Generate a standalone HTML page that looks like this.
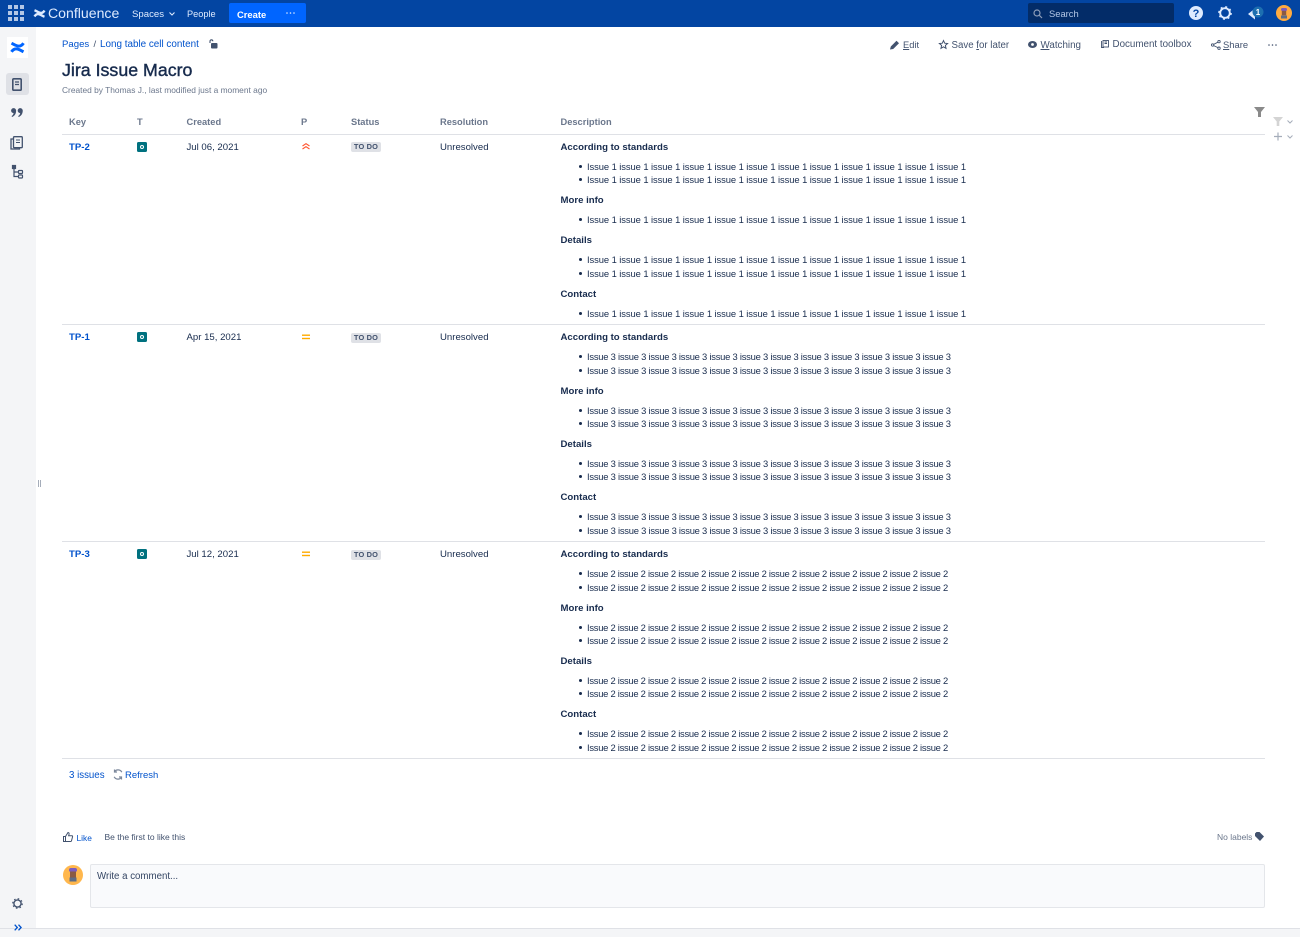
<!DOCTYPE html>
<html><head><meta charset="utf-8"><title>Jira Issue Macro</title>
<style>
html,body{margin:0;padding:0;width:1300px;height:937px;overflow:hidden;background:#fff;font-family:"Liberation Sans",sans-serif;color:#172b4d}
.t{position:absolute;white-space:nowrap;font-size:9.6px;line-height:14px;color:#172b4d}
.n{line-height:12px}
a,.l{color:#0052cc;text-decoration:none}
.h{font-weight:bold;color:#6b778c;font-size:9.3px;line-height:12px}
.b{font-weight:bold;font-size:9.6px}
.g{color:#42526e}
.u{left:587px;font-size:9.4px;letter-spacing:-.07px;line-height:12px}
.i3{letter-spacing:-.23px}
.i2{letter-spacing:-.26px}
.d{position:absolute;left:579px;width:3.4px;height:3.4px;border-radius:50%;background:#172b4d}
.r{position:absolute;left:62px;width:1203px;height:1px;background:#dfe1e6}
svg{position:absolute;overflow:visible}
.lz{position:absolute;width:30px;height:10px;left:351px;border-radius:2px;background:#dfe1e6;color:#42526e;font-size:7.4px;font-weight:bold;line-height:10px;text-align:center;letter-spacing:.2px}
.k{position:absolute;left:137px;width:10px;height:10px;border-radius:1.5px;background:#00717f}
.k:after{content:"";position:absolute;left:3px;top:3px;width:2px;height:2px;border:1px solid #fff;border-radius:50%}
</style></head><body>

<div style="position:absolute;left:0;top:0;width:1300px;height:27px;background:#0345a2"></div>
<div style="position:absolute;left:0;top:27px;width:36px;height:910px;background:#f4f5f7"></div>
<div style="position:absolute;left:0;top:928px;width:1300px;height:9px;background:#f4f5f7;border-top:1px solid #dfe1e6;box-sizing:border-box"></div>

<!-- app grid -->
<svg style="left:8px;top:5px" width="16" height="16" fill="#b3c7e6"><rect x="0" y="0" width="4" height="4"/><rect x="6" y="0" width="4" height="4"/><rect x="12" y="0" width="4" height="4"/><rect x="0" y="6" width="4" height="4"/><rect x="6" y="6" width="4" height="4"/><rect x="12" y="6" width="4" height="4"/><rect x="0" y="12" width="4" height="4"/><rect x="6" y="12" width="4" height="4"/><rect x="12" y="12" width="4" height="4"/></svg>
<!-- logo -->
<svg style="left:34px;top:8px" width="11" height="11" fill="none" stroke="#deebff" stroke-width="2.4"><path d="M.5 8.5C3.5 3.5 7 7.5 10.5 8.8"/><path d="M.5 2.2C4 3.5 7.5 7.5 10.5 2.5"/></svg>
<div class="t" style="left:48px;top:5px;font-size:14.1px;line-height:16px;color:#deebff">Confluence</div>
<div class="t" style="left:132px;top:8px;color:#deebff">Spaces</div>
<svg style="left:168.5px;top:12px" width="6" height="4" fill="none" stroke="#deebff" stroke-width="1.1"><path d="M.5.5L3 3 5.5.5"/></svg>
<div class="t n" style="left:187px;top:8px;color:#deebff;font-size:9.2px">People</div>
<div style="position:absolute;left:229px;top:3px;width:77px;height:20px;border-radius:2px;background:#0065ff"></div>
<div class="t n" style="left:237px;top:9px;color:#fff;font-weight:bold;font-size:9.4px">Create</div>
<svg style="left:286px;top:12px" width="9" height="2" fill="#deebff"><circle cx="1" cy="1" r=".8"/><circle cx="4.5" cy="1" r=".8"/><circle cx="8" cy="1" r=".8"/></svg>

<div style="position:absolute;left:1028px;top:3px;width:146px;height:20px;border-radius:2px;background:#032c68"></div>
<svg style="left:1033px;top:9px" width="10" height="10" fill="none" stroke="#8c9cb8" stroke-width="1.2"><circle cx="4" cy="4" r="3"/><path d="M6.2 6.2L9 9"/></svg>
<div class="t n" style="left:1049px;top:8px;color:#b3c7e6;font-size:9.4px">Search</div>
<svg style="left:1189px;top:6px" width="14" height="14"><circle cx="7" cy="7" r="7" fill="#deebff"/><text x="7" y="11" text-anchor="middle" font-family="Liberation Sans" font-size="11" font-weight="bold" fill="#0345a2">?</text></svg>
<svg style="left:1218px;top:6px" width="14" height="14" fill="none" stroke="#deebff"><circle cx="7" cy="7" r="4.8" stroke-width="1.9"/><circle cx="7" cy="7" r="6.2" stroke-width="1.3" stroke-dasharray="2 2.87"/></svg>
<svg style="left:1247px;top:5px" width="19" height="15"><path d="M1 9L8 3.5V14.5Z M4 11L7 14" fill="#deebff"/><circle cx="11" cy="7" r="5.5" fill="#1d6fb0"/><text x="11" y="10" text-anchor="middle" font-family="Liberation Sans" font-size="8" font-weight="bold" fill="#fff">1</text></svg>
<svg style="left:1276px;top:5px" width="16" height="16"><circle cx="8" cy="8" r="8" fill="#ffab40"/><rect x="5" y="3" width="6" height="3" rx="1.5" fill="#7a5cc0"/><rect x="5.8" y="5.8" width="4.4" height="4.5" fill="#8a5a44"/><rect x="5" y="10.5" width="6" height="3" fill="#5e6c84"/></svg>

<!-- sidebar -->
<div style="position:absolute;left:7px;top:37px;width:21px;height:21px;background:#fff"></div>
<svg style="left:11px;top:41px" width="13" height="13" fill="none" stroke="#0065ff" stroke-width="3"><path d="M.5 10.8C4 5.5 8 8.5 12.5 10.8"/><path d="M.5 2.2C5 4.5 9 7.5 12.5 2.2"/></svg>
<div style="position:absolute;left:6px;top:73px;width:23px;height:22px;border-radius:3px;background:#dfe1e6"></div>
<svg style="left:12px;top:78px" width="10" height="13" fill="none" stroke="#42526e" stroke-width="1.6"><rect x=".8" y=".8" width="8.4" height="11.4" rx="1"/><path d="M3 4H7M3 6.5H7" stroke-width="1.2"/></svg>
<svg style="left:11px;top:108px" width="12" height="9" fill="#42526e"><circle cx="2.6" cy="2.6" r="2.5"/><circle cx="9.2" cy="2.6" r="2.5"/><path d="M5.1 2.6C5.2 5.6 3.6 8 1 9L.6 8C2 7.2 2.6 6 2.6 4.5Z"/><path d="M11.7 2.6C11.8 5.6 10.2 8 7.6 9L7.2 8C8.6 7.2 9.2 6 9.2 4.5Z"/></svg>
<svg style="left:10px;top:136px" width="13" height="14" fill="none" stroke="#42526e" stroke-width="1.3"><rect x="3.5" y=".7" width="8.8" height="11" rx="1"/><path d="M3.5 3H1V13H9.5V11.7"/><path d="M6 4H10M6 6.5H10" stroke-width="1.1"/></svg>
<svg style="left:12px;top:165px" width="12" height="14" fill="none" stroke="#42526e" stroke-width="1.2"><rect x=".5" y=".5" width="3" height="3" fill="#42526e"/><path d="M2 3V11.5H6M2 7H6"/><rect x="6.5" y="5.5" width="4" height="3" rx=".6"/><rect x="6.5" y="10" width="4" height="3" rx=".6"/></svg>
<svg style="left:12px;top:898px" width="11" height="11" fill="none" stroke="#42526e"><circle cx="5.5" cy="5.5" r="3.6" stroke-width="1.4"/><circle cx="5.5" cy="5.5" r="4.8" stroke-width="1.1" stroke-dasharray="1.6 2.17"/></svg>
<svg style="left:14px;top:924px" width="8" height="7" fill="none" stroke="#0052cc" stroke-width="1.3"><path d="M.7.7L3.3 3.5.7 6.3M4.5.7L7.1 3.5 4.5 6.3"/></svg>
<div style="position:absolute;left:38px;top:480px;width:1px;height:7px;background:#a5adba;box-shadow:2px 0 #a5adba"></div>

<!-- breadcrumbs -->
<div class="t l" style="left:62px;top:38px">Pages</div>
<div class="t g" style="left:93.5px;top:38px">/</div>
<div class="t l" style="left:100px;top:38px;font-size:9.9px">Long table cell content</div>
<svg style="left:209px;top:39px" width="9" height="10" fill="none" stroke="#42526e" stroke-width="1.1"><path d="M1 4V2.2C1 .3 3.8 .3 3.8 2.2"/><rect x="2" y="4" width="6.5" height="5.5" rx="1" fill="#42526e" stroke="none"/></svg>

<!-- page actions -->
<svg style="left:890px;top:40px" width="10" height="10" fill="#42526e"><path d="M0 9.5L.8 6.5 6.5.8 9 3.3 3.2 9Z"/></svg>
<div class="t g n" style="left:903px;top:39px;font-size:9.3px"><u>E</u>dit</div>
<svg style="left:939px;top:40px" width="9" height="9" fill="none" stroke="#42526e" stroke-width="1"><path d="M4.5.6L5.7 3.2 8.6 3.5 6.4 5.4 7 8.3 4.5 6.8 2 8.3 2.6 5.4.4 3.5 3.3 3.2Z"/></svg>
<div class="t g" style="left:951.5px;top:39px;font-size:9.7px">Save <u>f</u>or later</div>
<svg style="left:1028px;top:41px" width="9" height="7"><ellipse cx="4.5" cy="3.5" rx="4.5" ry="3.5" fill="#42526e"/><circle cx="4.5" cy="3.5" r="1.4" fill="#fff"/></svg>
<div class="t g" style="left:1040.5px;top:39px;font-size:9.8px"><u>W</u>atching</div>
<svg style="left:1101px;top:40px" width="8" height="8" fill="none" stroke="#42526e" stroke-width=".9"><rect x="2" y=".5" width="5.5" height="6.5"/><path d="M.5 1V7.5H3"/><path d="M3.5 2H6M3.5 3.5H6"/></svg>
<div class="t g" style="left:1112.5px;top:38px;font-size:9.8px">Document toolbox</div>
<svg style="left:1211px;top:40px" width="10" height="10" fill="none" stroke="#42526e" stroke-width=".9"><circle cx="1.6" cy="5" r="1.2"/><circle cx="8" cy="1.6" r="1.2"/><circle cx="8" cy="8.2" r="1.2"/><path d="M2.7 4.4L6.9 2.2M2.7 5.6L6.9 7.6"/></svg>
<div class="t g n" style="left:1223px;top:39px;font-size:9.4px"><u>S</u>hare</div>
<svg style="left:1268px;top:44px" width="9" height="2" fill="#42526e"><circle cx="1" cy="1" r=".8"/><circle cx="4.5" cy="1" r=".8"/><circle cx="8" cy="1" r=".8"/></svg>

<div class="t" style="left:62px;top:60px;font-size:17.8px;line-height:20px;font-weight:400;-webkit-text-stroke:.4px #172b4d">Jira Issue Macro</div>
<div class="t n" style="left:62px;top:83.5px;font-size:8.4px;color:#6b778c">Created by Thomas J., last modified just a moment ago</div>

<!-- filters -->
<svg style="left:1254px;top:107px" width="12" height="10" fill="#8a8a8a"><path d="M0 0H11L7 5V10H4V5Z"/></svg>
<svg style="left:1273px;top:117px" width="10" height="9" fill="#d4d4d4"><path d="M0 0H10L6.3 4.5V9H3.7V4.5Z"/></svg>
<svg style="left:1287px;top:120px" width="6" height="4" fill="none" stroke="#a5adba"><path d="M.5.5L3 3 5.5.5"/></svg>
<svg style="left:1274px;top:132px" width="8" height="9" fill="none" stroke="#a5adba" stroke-width="1.2"><path d="M4 .5V8.5M0 4.5H8"/></svg>
<svg style="left:1287px;top:135px" width="6" height="4" fill="none" stroke="#a5adba"><path d="M.5.5L3 3 5.5.5"/></svg>

<!-- table head -->
<div class="t h" style="left:69px;top:116px">Key</div>
<div class="t h" style="left:137px;top:116px">T</div>
<div class="t h" style="left:186.5px;top:116px">Created</div>
<div class="t h" style="left:301px;top:116px">P</div>
<div class="t h" style="left:351px;top:116px">Status</div>
<div class="t h" style="left:440px;top:116px">Resolution</div>
<div class="t h" style="left:560.5px;top:116px">Description</div>
<div class="r" style="top:134px;height:1px"></div>

<!-- row 1 -->
<div class="t l b" style="left:69px;top:141px">TP-2</div>
<div class="k" style="top:142px"></div>
<div class="t" style="left:186.5px;top:141px">Jul 06, 2021</div>
<svg style="left:302px;top:143px" width="8" height="7" fill="none" stroke="#ff5630" stroke-width="1.1"><path d="M.5 3L4 .7 7.5 3M.5 6L4 3.7 7.5 6"/></svg>
<div class="lz" style="top:142px">TO DO</div>
<div class="t" style="left:440px;top:141px">Unresolved</div>
<div class="t b" style="left:560.5px;top:141px">According to standards</div>
<div class="d" style="top:165px"></div><div class="t u" style="top:161px">Issue 1 issue 1 issue 1 issue 1 issue 1 issue 1 issue 1 issue 1 issue 1 issue 1 issue 1 issue 1</div>
<div class="d" style="top:178px"></div><div class="t u" style="top:174px">Issue 1 issue 1 issue 1 issue 1 issue 1 issue 1 issue 1 issue 1 issue 1 issue 1 issue 1 issue 1</div>
<div class="t b" style="left:560.5px;top:194px">More info</div>
<div class="d" style="top:218px"></div><div class="t u" style="top:214px">Issue 1 issue 1 issue 1 issue 1 issue 1 issue 1 issue 1 issue 1 issue 1 issue 1 issue 1 issue 1</div>
<div class="t b" style="left:560.5px;top:234px">Details</div>
<div class="d" style="top:258px"></div><div class="t u" style="top:254px">Issue 1 issue 1 issue 1 issue 1 issue 1 issue 1 issue 1 issue 1 issue 1 issue 1 issue 1 issue 1</div>
<div class="d" style="top:272px"></div><div class="t u" style="top:268px">Issue 1 issue 1 issue 1 issue 1 issue 1 issue 1 issue 1 issue 1 issue 1 issue 1 issue 1 issue 1</div>
<div class="t b" style="left:560.5px;top:288px">Contact</div>
<div class="d" style="top:312px"></div><div class="t u" style="top:308px">Issue 1 issue 1 issue 1 issue 1 issue 1 issue 1 issue 1 issue 1 issue 1 issue 1 issue 1 issue 1</div>
<div class="r" style="top:324px"></div>

<!-- row 2 -->
<div class="t l b" style="left:69px;top:331px">TP-1</div>
<div class="k" style="top:332px"></div>
<div class="t" style="left:186.5px;top:331px">Apr 15, 2021</div>
<svg style="left:302px;top:334px" width="8" height="6" fill="#ffab00"><rect y=".5" width="8" height="1.4"/><rect y="3.8" width="8" height="1.4"/></svg>
<div class="lz" style="top:332.5px">TO DO</div>
<div class="t" style="left:440px;top:331px">Unresolved</div>
<div class="t b" style="left:560.5px;top:331px">According to standards</div>
<div class="d" style="top:355px"></div><div class="t u i3" style="top:351px">Issue 3 issue 3 issue 3 issue 3 issue 3 issue 3 issue 3 issue 3 issue 3 issue 3 issue 3 issue 3</div>
<div class="d" style="top:369px"></div><div class="t u i3" style="top:365px">Issue 3 issue 3 issue 3 issue 3 issue 3 issue 3 issue 3 issue 3 issue 3 issue 3 issue 3 issue 3</div>
<div class="t b" style="left:560.5px;top:385px">More info</div>
<div class="d" style="top:409px"></div><div class="t u i3" style="top:405px">Issue 3 issue 3 issue 3 issue 3 issue 3 issue 3 issue 3 issue 3 issue 3 issue 3 issue 3 issue 3</div>
<div class="d" style="top:422px"></div><div class="t u i3" style="top:418px">Issue 3 issue 3 issue 3 issue 3 issue 3 issue 3 issue 3 issue 3 issue 3 issue 3 issue 3 issue 3</div>
<div class="t b" style="left:560.5px;top:438px">Details</div>
<div class="d" style="top:462px"></div><div class="t u i3" style="top:458px">Issue 3 issue 3 issue 3 issue 3 issue 3 issue 3 issue 3 issue 3 issue 3 issue 3 issue 3 issue 3</div>
<div class="d" style="top:475px"></div><div class="t u i3" style="top:471px">Issue 3 issue 3 issue 3 issue 3 issue 3 issue 3 issue 3 issue 3 issue 3 issue 3 issue 3 issue 3</div>
<div class="t b" style="left:560.5px;top:491px">Contact</div>
<div class="d" style="top:515px"></div><div class="t u i3" style="top:511px">Issue 3 issue 3 issue 3 issue 3 issue 3 issue 3 issue 3 issue 3 issue 3 issue 3 issue 3 issue 3</div>
<div class="d" style="top:529px"></div><div class="t u i3" style="top:525px">Issue 3 issue 3 issue 3 issue 3 issue 3 issue 3 issue 3 issue 3 issue 3 issue 3 issue 3 issue 3</div>
<div class="r" style="top:541px"></div>

<!-- row 3 -->
<div class="t l b" style="left:69px;top:548px">TP-3</div>
<div class="k" style="top:549px"></div>
<div class="t" style="left:186.5px;top:548px">Jul 12, 2021</div>
<svg style="left:302px;top:551px" width="8" height="6" fill="#ffab00"><rect y=".5" width="8" height="1.4"/><rect y="3.8" width="8" height="1.4"/></svg>
<div class="lz" style="top:549.5px">TO DO</div>
<div class="t" style="left:440px;top:548px">Unresolved</div>
<div class="t b" style="left:560.5px;top:548px">According to standards</div>
<div class="d" style="top:572px"></div><div class="t u i2" style="top:568px">Issue 2 issue 2 issue 2 issue 2 issue 2 issue 2 issue 2 issue 2 issue 2 issue 2 issue 2 issue 2</div>
<div class="d" style="top:586px"></div><div class="t u i2" style="top:582px">Issue 2 issue 2 issue 2 issue 2 issue 2 issue 2 issue 2 issue 2 issue 2 issue 2 issue 2 issue 2</div>
<div class="t b" style="left:560.5px;top:602px">More info</div>
<div class="d" style="top:626px"></div><div class="t u i2" style="top:622px">Issue 2 issue 2 issue 2 issue 2 issue 2 issue 2 issue 2 issue 2 issue 2 issue 2 issue 2 issue 2</div>
<div class="d" style="top:639px"></div><div class="t u i2" style="top:635px">Issue 2 issue 2 issue 2 issue 2 issue 2 issue 2 issue 2 issue 2 issue 2 issue 2 issue 2 issue 2</div>
<div class="t b" style="left:560.5px;top:655px">Details</div>
<div class="d" style="top:679px"></div><div class="t u i2" style="top:675px">Issue 2 issue 2 issue 2 issue 2 issue 2 issue 2 issue 2 issue 2 issue 2 issue 2 issue 2 issue 2</div>
<div class="d" style="top:692px"></div><div class="t u i2" style="top:688px">Issue 2 issue 2 issue 2 issue 2 issue 2 issue 2 issue 2 issue 2 issue 2 issue 2 issue 2 issue 2</div>
<div class="t b" style="left:560.5px;top:708px">Contact</div>
<div class="d" style="top:732px"></div><div class="t u i2" style="top:728px">Issue 2 issue 2 issue 2 issue 2 issue 2 issue 2 issue 2 issue 2 issue 2 issue 2 issue 2 issue 2</div>
<div class="d" style="top:746px"></div><div class="t u i2" style="top:742px">Issue 2 issue 2 issue 2 issue 2 issue 2 issue 2 issue 2 issue 2 issue 2 issue 2 issue 2 issue 2</div>
<div class="r" style="top:758px"></div>

<!-- footer -->
<div class="t l" style="left:69px;top:769px;font-size:9.7px">3 issues</div>
<svg style="left:113px;top:769px" width="10" height="11" fill="none" stroke="#7a869a" stroke-width="1.2"><path d="M8.8 3.2A4.2 4.2 0 0 0 1.5 2.8M1.2 7.8A4.2 4.2 0 0 0 8.5 8.2"/><path d="M1.5 .5V3H4M8.5 10.5V8H6"/></svg>
<div class="t l" style="left:125px;top:769px;font-size:9.5px">Refresh</div>

<svg style="left:63px;top:832px" width="10" height="10" fill="none" stroke="#42526e" stroke-width="1"><path d="M.5 4.5H2.5V9.5H.5ZM2.5 4.5L5 .5C6 .5 6.3 1.5 6 2.5L5.6 3.8H9C9.6 3.8 9.7 4.4 9.5 5L8.5 8.8C8.4 9.3 8 9.5 7.5 9.5H2.5"/></svg>
<div class="t l n" style="left:76.5px;top:832px;font-size:8.4px">Like</div>
<div class="t g n" style="left:104.5px;top:831px;font-size:8.5px">Be the first to like this</div>
<div class="t n" style="left:1217px;top:831px;font-size:8.5px;color:#6b778c">No labels</div>
<svg style="left:1255px;top:832px" width="9" height="9" fill="#42526e"><path d="M0 1.5L1.5 0H4.5L9 4.5 5 9 0 4Z"/></svg>

<svg style="left:63px;top:865px" width="20" height="20"><circle cx="10" cy="10" r="10" fill="#ffb74d"/><rect x="6" y="3" width="8" height="4" rx="2" fill="#7a5cc0"/><rect x="7" y="6.5" width="6" height="6" fill="#8a5a44"/><rect x="6.5" y="12.5" width="7" height="4" fill="#5e6c84"/></svg>
<div style="position:absolute;left:90px;top:864px;width:1175px;height:44px;box-sizing:border-box;background:#f9fafc;border:1px solid #e4e6ea;border-radius:2px"></div>
<div class="t" style="left:97px;top:870px;color:#344563;font-size:9.7px">Write a comment...</div>
</body></html>
